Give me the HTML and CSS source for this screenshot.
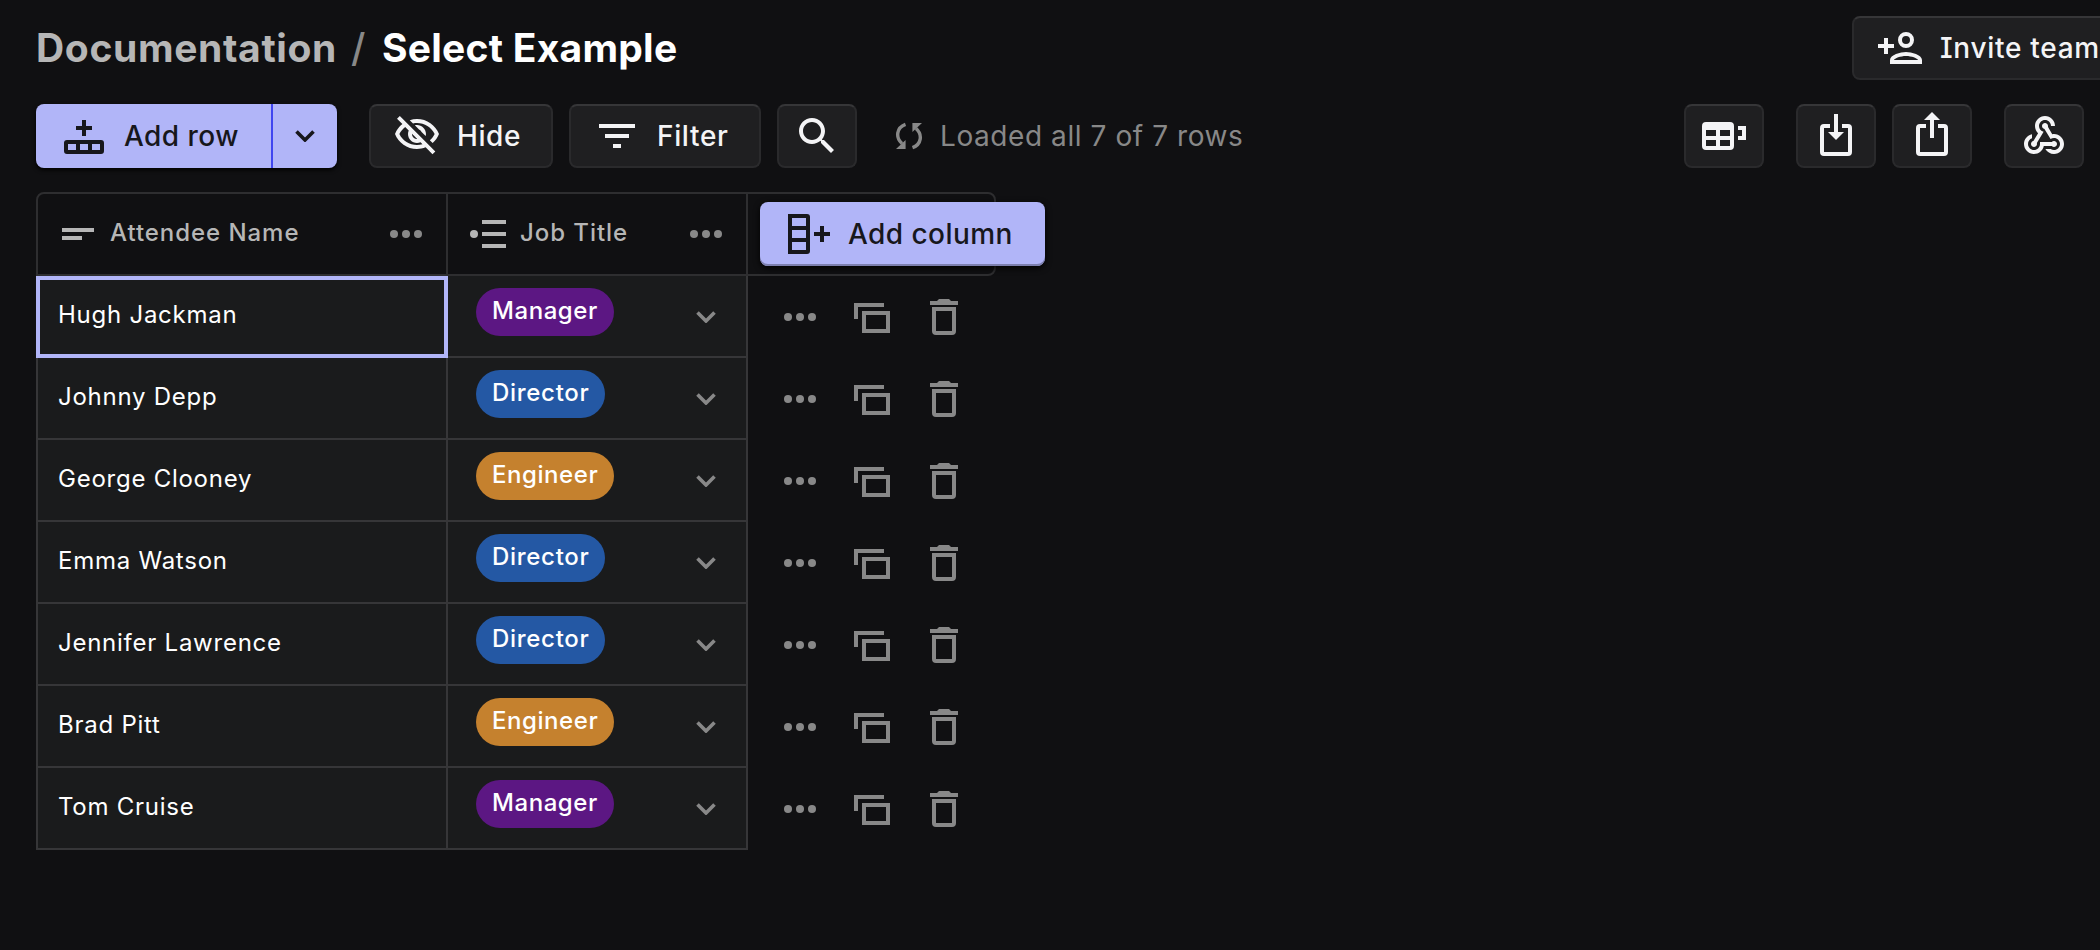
FILE: index.html
```
<!DOCTYPE html>
<html lang="en">
<head>
<meta charset="utf-8">
<title>Select Example</title>
<link rel="stylesheet" href="styles.css">
</head>
<body>
<svg class="defs" aria-hidden="true">
  <symbol id="dots" viewBox="0 0 32 8"><circle cx="4" cy="4" r="4"/><circle cx="16" cy="4" r="4"/><circle cx="28" cy="4" r="4"/></symbol>
  <symbol id="chevron" viewBox="0 0 20 12"><path d="M1.5 1.5 10 10l8.500-8.500" fill="none" stroke="currentColor" stroke-width="3.600"/></symbol>
  <symbol id="copy" viewBox="0 0 36 30"><path d="M0 0h30v4H4v12H0z"/><path d="M10 10h24v18H10z" fill="none" stroke="currentColor" stroke-width="4"/></symbol>
  <symbol id="trash" viewBox="0 0 28 36"><path d="M0 2h7l2-2h10l2 2h7v4H0z"/><path d="M4 10h20v22a2 2 0 0 1-2 2H6a2 2 0 0 1-2-2z" fill="none" stroke="currentColor" stroke-width="4"/></symbol>
</svg>

<header class="topbar">
  <h1 class="breadcrumb"><span class="crumb">Documentation</span><span class="slash">/</span><span class="current">Select Example</span></h1>
  <button class="btn invite">
    <svg class="icon" viewBox="0 0 48 48"><path d="M8 14h4v6h6v4h-6v6H8v-6H2v-4h6z"/><circle cx="30" cy="16" r="6" fill="none" stroke="currentColor" stroke-width="4"/><path fill-rule="evenodd" d="M14 40v-4c0-5.300 10.700-8 16-8s16 2.700 16 8v4zM18 36h24c-.6-1.700-6.500-4-12-4s-11.400 2.300-12 4z"/></svg>
    <span>Invite team</span>
  </button>
</header>

<div class="toolbar">
  <div class="split">
    <button class="add-row">
      <svg class="icon" viewBox="0 0 48 48"><path d="M22 8h4v6h6v4h-6v6h-4v-6h-6v-4h6z"/><path fill-rule="evenodd" d="M7 28h34a3 3 0 0 1 3 3v8a3 3 0 0 1-3 3H7a3 3 0 0 1-3-3v-8a3 3 0 0 1 3-3zM8 32v6h8v-6zM20 32v6h8v-6zM32 32v6h8v-6z"/></svg>
      <span>Add row</span>
    </button>
    <button class="more"><svg class="chevron" viewBox="0 0 20 12"><use href="#chevron"/></svg></button>
  </div>
  <button class="btn hide">
    <svg class="icon eye" viewBox="0 0 24 24"><path d="M12 6c3.790 0 7.170 2.130 8.820 5.500-.59 1.220-1.420 2.270-2.410 3.120l1.410 1.410c1.390-1.230 2.490-2.770 3.180-4.530C21.270 7.110 17 4 12 4c-1.270 0-2.490.2-3.640.57l1.650 1.650C10.660 6.090 11.320 6 12 6zm-1.070 1.140L13 9.210c.57.25 1.030.71 1.280 1.280l2.070 2.070c.08-.34.14-.7.14-1.070C16.500 9.010 14.480 7 12 7c-.37 0-.72.05-1.070.14zM2.010 3.870l2.680 2.680C3.060 7.830 1.770 9.530 1 11.500 2.730 15.890 7 19 12 19c1.520 0 2.980-.29 4.320-.82l3.420 3.420 1.410-1.410L3.420 2.450 2.010 3.870zm7.500 7.500l2.610 2.610c-.04.01-.08.02-.12.02-1.380 0-2.500-1.120-2.500-2.500 0-.05.01-.08.01-.13zm-3.400-3.400l1.750 1.750c-.23.55-.36 1.150-.36 1.780 0 2.480 2.020 4.500 4.500 4.500.63 0 1.230-.13 1.770-.36l.98.98c-.88.24-1.800.38-2.750.38-3.790 0-7.170-2.130-8.820-5.500.7-1.430 1.720-2.610 2.930-3.530z"/></svg>
    <span>Hide</span>
  </button>
  <button class="btn filter">
    <svg class="icon" viewBox="0 0 24 24"><path d="M10 18h4v-2h-4v2zM3 6v2h18V6H3zm3 7h12v-2H6v2z"/></svg>
    <span>Filter</span>
  </button>
  <button class="btn square">
    <svg class="icon" viewBox="0 0 24 24"><path d="M15.500 14h-.79l-.28-.27C15.410 12.590 16 11.110 16 9.500 16 5.910 13.090 3 9.500 3S3 5.910 3 9.500 5.910 16 9.500 16c1.610 0 3.090-.59 4.230-1.570l.27.28v.79l5 4.990L20.490 19l-4.990-5zm-6 0C7.010 14 5 11.990 5 9.500S7.010 5 9.500 5 14 7.010 14 9.500 11.990 14 9.500 14z"/></svg>
  </button>
  <div class="status">
    <svg class="refresh" viewBox="0 0 28 28"><path d="M10.500 2.300C1.500 5.500.2 15.500 7 21.500M17.500 25.700C26.500 22.500 27.800 12.500 21 6.500" fill="none" stroke="currentColor" stroke-width="3.400"/><path d="M10.600 18v9H1zM17.400 10V1H27z"/></svg>
    <span>Loaded all 7 of 7 rows</span>
  </div>
  <div class="tools">
    <button class="btn square"><svg class="icon" viewBox="0 0 48 48"><path fill-rule="evenodd" d="M6 10h24a4 4 0 0 1 4 4v20a4 4 0 0 1-4 4H6a4 4 0 0 1-4-4V14a4 4 0 0 1 4-4zM6 18v6h10v-6zM20 18v6h10v-6zM6 28v6h10v-6zM20 28v6h10v-6z"/><path d="M38 14h8v14h-8v-4h4v-6h-4z"/></svg></button>
    <button class="btn square spaced"><svg class="icon" viewBox="0 0 48 48"><path d="M18 14h-6a2 2 0 0 0-2 2v24a2 2 0 0 0 2 2h24a2 2 0 0 0 2-2V16a2 2 0 0 0-2-2h-6" fill="none" stroke="currentColor" stroke-width="4"/><path d="M22 2h4v18h6l-8 8-8-8h6z"/></svg></button>
    <button class="btn square"><svg class="icon" viewBox="0 0 48 48"><path d="M18 14h-6a2 2 0 0 0-2 2v24a2 2 0 0 0 2 2h24a2 2 0 0 0 2-2V16a2 2 0 0 0-2-2h-6" fill="none" stroke="currentColor" stroke-width="4"/><path d="M22 26h4V8h6l-8-8-8 8h6z"/></svg></button>
    <button class="btn square spaced"><svg class="icon" viewBox="0 0 24 24"><path d="M10 15h5.880c.27-.31.67-.5 1.120-.5.83 0 1.500.67 1.500 1.500s-.67 1.500-1.500 1.500c-.44 0-.84-.19-1.120-.5H11.900c-.46 2.280-2.480 4-4.900 4-2.760 0-5-2.240-5-5 0-2.420 1.720-4.440 4-4.900v2.070C4.840 13.580 4 14.700 4 16c0 1.650 1.350 3 3 3s3-1.350 3-3v-1zm2.500-11c1.650 0 3 1.350 3 3h2c0-2.760-2.240-5-5-5s-5 2.240-5 5c0 1.430.6 2.710 1.550 3.620l-2.350 3.900C6.020 14.660 5.500 15.270 5.500 16c0 .83.67 1.500 1.500 1.500s1.500-.67 1.500-1.500c0-.16-.02-.31-.07-.45l3.380-5.630C10.490 9.610 9.500 8.420 9.500 7c0-1.650 1.350-3 3-3zm4.500 9c-.64 0-1.230.2-1.720.54l-3.050-5.070C11.530 8.350 11 7.740 11 7c0-.83.67-1.500 1.500-1.500S14 6.170 14 7c0 .15-.02.29-.06.43l2.190 3.650C16.410 11.030 16.700 11 17 11c2.760 0 5 2.240 5 5s-2.240 5-5 5c-1.850 0-3.470-1.010-4.330-2.500h2.670c.48.32 1.050.5 1.660.5 1.650 0 3-1.350 3-3s-1.350-3-3-3z"/></svg></button>
  </div>
</div>

<main class="grid">
  <div class="head">
    <div class="th name-col">
      <svg class="type-text" viewBox="0 0 32 12"><path d="M0 0h32v4H0zM0 8h20v4H0z"/></svg>
      <span>Attendee Name</span>
      <svg class="dots" viewBox="0 0 32 8"><use href="#dots"/></svg>
    </div>
    <div class="th job-col">
      <svg class="type-select" viewBox="0 0 36 28"><circle cx="4" cy="14" r="4"/><path d="M12 0h24v4H12zM12 12h24v4H12zM12 24h24v4H12z"/></svg>
      <span>Job Title</span>
      <svg class="dots" viewBox="0 0 32 8"><use href="#dots"/></svg>
    </div>
    <button class="add-column">
      <svg class="icon" viewBox="0 0 48 48"><path fill-rule="evenodd" d="M4 4h19a3 3 0 0 1 3 3v34a3 3 0 0 1-3 3H4zM8 8v8h14V8zM8 20v8h14v-8zM8 32v8h14v-8z"/><path d="M36 16h4v6h6v4h-6v6h-4v-6h-6v-4h6z"/></svg>
      <span>Add column</span>
    </button>
  </div>

  <div class="row">
    <div class="cell name focused">Hugh Jackman</div>
    <div class="cell job"><span class="pill manager">Manager</span><svg class="chevron" viewBox="0 0 20 12"><use href="#chevron"/></svg></div>
    <div class="actions"><svg class="dots" viewBox="0 0 32 8"><use href="#dots"/></svg><svg class="copy" viewBox="0 0 36 30"><use href="#copy"/></svg><svg class="trash" viewBox="0 0 28 36"><use href="#trash"/></svg></div>
  </div>
  <div class="row">
    <div class="cell name">Johnny Depp</div>
    <div class="cell job"><span class="pill director">Director</span><svg class="chevron" viewBox="0 0 20 12"><use href="#chevron"/></svg></div>
    <div class="actions"><svg class="dots" viewBox="0 0 32 8"><use href="#dots"/></svg><svg class="copy" viewBox="0 0 36 30"><use href="#copy"/></svg><svg class="trash" viewBox="0 0 28 36"><use href="#trash"/></svg></div>
  </div>
  <div class="row">
    <div class="cell name">George Clooney</div>
    <div class="cell job"><span class="pill engineer">Engineer</span><svg class="chevron" viewBox="0 0 20 12"><use href="#chevron"/></svg></div>
    <div class="actions"><svg class="dots" viewBox="0 0 32 8"><use href="#dots"/></svg><svg class="copy" viewBox="0 0 36 30"><use href="#copy"/></svg><svg class="trash" viewBox="0 0 28 36"><use href="#trash"/></svg></div>
  </div>
  <div class="row">
    <div class="cell name">Emma Watson</div>
    <div class="cell job"><span class="pill director">Director</span><svg class="chevron" viewBox="0 0 20 12"><use href="#chevron"/></svg></div>
    <div class="actions"><svg class="dots" viewBox="0 0 32 8"><use href="#dots"/></svg><svg class="copy" viewBox="0 0 36 30"><use href="#copy"/></svg><svg class="trash" viewBox="0 0 28 36"><use href="#trash"/></svg></div>
  </div>
  <div class="row">
    <div class="cell name">Jennifer Lawrence</div>
    <div class="cell job"><span class="pill director">Director</span><svg class="chevron" viewBox="0 0 20 12"><use href="#chevron"/></svg></div>
    <div class="actions"><svg class="dots" viewBox="0 0 32 8"><use href="#dots"/></svg><svg class="copy" viewBox="0 0 36 30"><use href="#copy"/></svg><svg class="trash" viewBox="0 0 28 36"><use href="#trash"/></svg></div>
  </div>
  <div class="row">
    <div class="cell name">Brad Pitt</div>
    <div class="cell job"><span class="pill engineer">Engineer</span><svg class="chevron" viewBox="0 0 20 12"><use href="#chevron"/></svg></div>
    <div class="actions"><svg class="dots" viewBox="0 0 32 8"><use href="#dots"/></svg><svg class="copy" viewBox="0 0 36 30"><use href="#copy"/></svg><svg class="trash" viewBox="0 0 28 36"><use href="#trash"/></svg></div>
  </div>
  <div class="row">
    <div class="cell name">Tom Cruise</div>
    <div class="cell job"><span class="pill manager">Manager</span><svg class="chevron" viewBox="0 0 20 12"><use href="#chevron"/></svg></div>
    <div class="actions"><svg class="dots" viewBox="0 0 32 8"><use href="#dots"/></svg><svg class="copy" viewBox="0 0 36 30"><use href="#copy"/></svg><svg class="trash" viewBox="0 0 28 36"><use href="#trash"/></svg></div>
  </div>
</main>
</body>
</html>
```
FILE: styles.css
```
*, *::before, *::after { box-sizing: border-box; }

html { overflow: hidden; background: #101012; }

body {
  margin: 0;
  height: 950px;
  overflow: hidden;
  background: #101012;
  color: #f4f4f6;
  font-family: Inter, sans-serif;
  font-feature-settings: "cv08";
}

svg { display: block; flex: none; fill: currentColor; }
.defs { width: 0; height: 0; position: absolute; }
.icon { width: 48px; height: 48px; }
.chevron { width: 20px; height: 12px; }
.dots { width: 32px; height: 8px; color: #888; }
.copy { width: 36px; height: 30px; }
.trash { width: 28px; height: 36px; }

button {
  display: flex;
  flex: none;
  align-items: center;
  gap: 16px;
  height: 64px;
  margin: 0;
  padding: 0 24px;
  border: 0;
  font: 500 28px/36px Inter, sans-serif;
  font-feature-settings: inherit;
  letter-spacing: 0.45px;
  white-space: nowrap;
  color: #17171c;
  background: #b1b5f8;
}

.btn {
  padding: 0 22px;
  border: 2px solid #2a2a2c;
  border-top-color: #363638;
  border-radius: 8px;
  color: #f4f4f6;
  background: #1f1f21;
}
.btn.square { width: 80px; padding: 0 14px; }

/* Top bar */
.topbar {
  display: flex;
  align-items: center;
  justify-content: space-between;
  height: 64px;
  margin-top: 16px;
  padding-left: 36px;
}
.breadcrumb {
  display: flex;
  align-items: center;
  margin: 0;
  padding-bottom: 1px;
  font-size: 39px;
  font-weight: 650;
  line-height: 63px;
  white-space: nowrap;
}
.crumb { width: 315px; letter-spacing: 0.65px; color: #b6b6b6; }
.slash { width: 31px; font-weight: 500; color: #888; }
.current { letter-spacing: 0.25px; color: #fff; }
.invite { width: 270px; margin-right: -22px; letter-spacing: 0.7px; }

/* Toolbar */
.toolbar {
  display: flex;
  align-items: center;
  height: 64px;
  margin-top: 24px;
  padding: 0 16px 0 36px;
}
.split { display: flex; width: 301px; margin-right: 32px; border-radius: 8px; overflow: hidden; box-shadow: 0 2px 4px #000; }
.add-row { width: 237px; border-right: 2px solid #4046f0; }
.more { width: 64px; padding: 0 0 0 22px; }
.hide { width: 184px; margin-right: 16px; letter-spacing: 0.6px; }
.eye { margin-top: -2px; }
.filter { width: 192px; margin-right: 16px; letter-spacing: 0.65px; }
.status {
  display: flex;
  align-items: center;
  gap: 17px;
  margin-left: 38px;
  font-size: 28px;
  letter-spacing: 0.57px;
  white-space: nowrap;
  color: #888;
}
.refresh { width: 28px; height: 28px; }
.tools { display: flex; gap: 16px; margin-left: auto; }
.spaced { margin-left: 16px; }

/* Table */
.grid { margin: 24px 0 0 36px; }
.head {
  display: flex;
  align-items: center;
  width: 960px;
  height: 84px;
  border: 2px solid #2e2e30;
  border-radius: 8px 8px 8px 0;
}
.th {
  display: flex;
  flex: none;
  align-items: center;
  height: 80px;
  padding-right: 24px;
  border-right: 2px solid #2e2e30;
  font-size: 24px;
  font-weight: 500;
  line-height: 28px;
  letter-spacing: 0.95px;
  color: #b6b6b6;
}
.th span { padding-bottom: 2px; }
.th .dots { margin-left: auto; }
.name-col { width: 410px; padding-left: 24px; gap: 16px; }
.job-col { width: 300px; padding-left: 22px; gap: 14px; }
.type-text { width: 32px; height: 12px; }
.type-select { width: 36px; height: 28px; }
.add-column {
  width: 285px;
  margin-left: 12px;
  border-radius: 8px;
  box-shadow: inset 0 -2px #7c7fae, 0 2px 6px #000;
}

.row { display: flex; height: 82px; }
.cell {
  display: flex;
  border-right: 2px solid #363638;
  border-bottom: 2px solid #363638;
  background: #1a1b1c;
}
.name {
  align-items: center;
  width: 412px;
  padding: 0 0 3px 20px;
  border-left: 2px solid #363638;
  font-size: 24px;
  letter-spacing: 0.75px;
  color: #fff;
}
.name.focused { padding: 0 0 5px 18px; border: 4px solid #b1b5f8; }
.job { justify-content: space-between; width: 300px; padding: 12px 30px 0 28px; }
.job .chevron { margin-top: 23px; color: #888; }
.pill {
  height: 48px;
  padding: 0 16px;
  border-radius: 24px;
  font-size: 24px;
  font-weight: 500;
  line-height: 46px;
  letter-spacing: 0.56px;
  color: #fff;
}
.manager { background: #5c1783; }
.director { letter-spacing: 0.7px; background: #2458a4; }
.engineer { background: #c5812e; }
.actions { display: flex; align-items: center; padding-left: 36px; color: #888; }
.actions .copy { margin: 2px 0 0 38px; }
.actions .trash { margin-left: 40px; }
```
